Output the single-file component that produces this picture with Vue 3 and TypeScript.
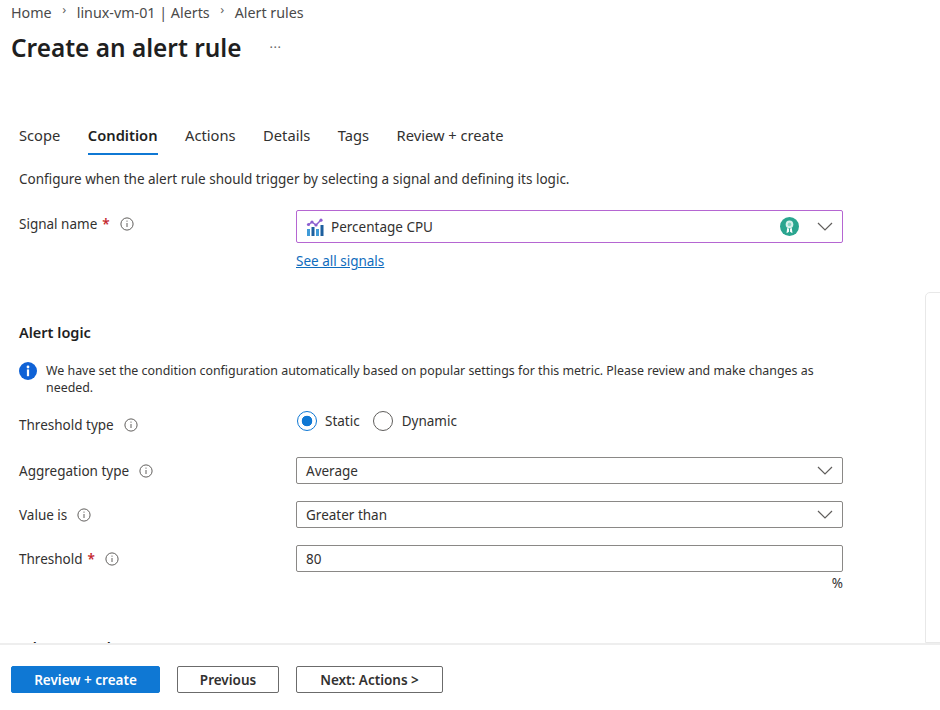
<template>
  <div class="page">
    <div class="content">
      <nav class="breadcrumb">
        <span>Home</span>
        <span class="crumb-sep">&rsaquo;</span>
        <span>linux-vm-01 | Alerts</span>
        <span class="crumb-sep">&rsaquo;</span>
        <span>Alert rules</span>
      </nav>
      <div class="title-row">
        <h1>Create an alert rule</h1>
        <span class="more">···</span>
      </div>

      <div class="tabs">
        <span v-for="tab in tabs" :key="tab" class="tab" :class="{ active: tab === 'Condition' }">{{ tab }}</span>
      </div>

      <p class="intro">Configure when the alert rule should trigger by selecting a signal and defining its logic.</p>

      <div class="form-row signal-row">
        <div class="label">
          Signal name <span class="req">*</span>
          <svg class="tip" viewBox="0 0 14 14"><circle cx="7" cy="7" r="6.1" /><path d="M7 6v4M7 3.6v1.1" /></svg>
        </div>
        <div>
          <div class="select signal">
            <svg class="metric-icon" width="18" height="18" viewBox="0 0 18 18">
              <path d="M2 7l4-3 4 3 5-5" fill="none" stroke="#8c5fd0" stroke-width="1.4" />
              <circle cx="2.5" cy="6.5" r="1.6" fill="#8c5fd0" />
              <circle cx="6" cy="4" r="1.6" fill="#8c5fd0" />
              <circle cx="10" cy="7" r="1.6" fill="#8c5fd0" />
              <circle cx="15" cy="2.2" r="1.6" fill="#8c5fd0" />
              <rect x="1" y="11" width="3" height="7" fill="#3f9bd8" />
              <rect x="5.5" y="9" width="3" height="9" fill="#1d5f9e" />
              <rect x="10" y="11" width="3" height="7" fill="#3f9bd8" />
              <rect x="14.5" y="7" width="3" height="11" fill="#1d5f9e" />
            </svg>
            <span class="grow">Percentage CPU</span>
            <svg class="badge" width="19" height="19" viewBox="0 0 18 18">
              <circle cx="9" cy="9" r="9" fill="#2aa58f" />
              <path d="M6.8 10.5L6.2 15.5 8.5 14V11ZM11.2 10.5L11.8 15.5 9.5 14V11Z" fill="#fff" />
              <circle cx="9" cy="7" r="3.6" fill="#d8f1ec" />
              <circle cx="9" cy="7" r="1.7" fill="#8fd6c8" />
            </svg>
            <svg class="chevron" width="16" height="9" viewBox="0 0 16 9"><path d="M1 1l7 7 7-7" /></svg>
          </div>
          <a class="link">See all signals</a>
        </div>
      </div>

      <h2>Alert logic</h2>
      <div class="notice">
        <svg class="info" width="18" height="18" viewBox="0 0 18 18">
          <circle cx="9" cy="9" r="9" fill="#0f62d6" />
          <rect x="7.9" y="7.4" width="2.2" height="6.8" fill="#fff" />
          <circle cx="9" cy="5" r="1.4" fill="#fff" />
        </svg>
        <p>We have set the condition configuration automatically based on popular settings for this metric. Please review and make changes as needed.</p>
      </div>

      <div class="form-row threshold-type">
        <div class="label">
          Threshold type
          <svg class="tip" viewBox="0 0 14 14"><circle cx="7" cy="7" r="6.1" /><path d="M7 6v4M7 3.6v1.1" /></svg>
        </div>
        <div class="radios">
          <span class="radio on"></span><span class="radio-text">Static</span>
          <span class="radio"></span><span class="radio-text">Dynamic</span>
        </div>
      </div>

      <div v-for="row in selectRows" :key="row.label" class="form-row field-row">
        <div class="label">
          {{ row.label }} <span v-if="row.required" class="req">*</span>
          <svg class="tip" viewBox="0 0 14 14"><circle cx="7" cy="7" r="6.1" /><path d="M7 6v4M7 3.6v1.1" /></svg>
        </div>
        <div class="select">
          <span class="grow">{{ row.value }}</span>
          <svg v-if="!row.isInput" class="chevron" width="16" height="9" viewBox="0 0 16 9"><path d="M1 1l7 7 7-7" /></svg>
        </div>
      </div>
      <div class="unit">%</div>

      <h2 class="when">When to evaluate</h2>

      <div class="side-panel"></div>
    </div>

    <footer class="footer">
      <button class="btn primary">Review + create</button>
      <button class="btn prev">Previous</button>
      <button class="btn next">Next: Actions &gt;</button>
    </footer>
  </div>
</template>

<script setup lang="ts">
const tabs: string[] = ['Scope', 'Condition', 'Actions', 'Details', 'Tags', 'Review + create']

const selectRows = [
  { label: 'Aggregation type', value: 'Average' },
  { label: 'Value is', value: 'Greater than' },
  { label: 'Threshold', value: '80', required: true, isInput: true }
]
</script>

<style>
html,
body {
  background: #fff;
}
</style>

<style scoped>
.page {
  width: 940px;
  height: 710px;
  display: flex;
  flex-direction: column;
  overflow: hidden;
  background: #fff;
  color: #323130;
  font-family: "Noto Sans", "Open Sans", sans-serif;
  font-size: 13.5px;
}

.content {
  position: relative;
  flex: 1;
  min-height: 0;
  overflow: hidden;
  padding: 0 0 0 19px;
}

.breadcrumb {
  display: flex;
  align-items: center;
  gap: 10.5px;
  margin-left: -8px;
  height: 24px;
  font-size: 14.3px;
  color: #4a4a4a;
}

.crumb-sep {
  font-size: 13px;
  margin-top: -6px;
  color: #666;
}

.title-row {
  display: flex;
  align-items: center;
  margin-left: -8px;
  height: 46px;
}

h1 {
  margin: 0;
  font-size: 24.4px;
  font-weight: 600;
  color: #1f1f1f;
}

.more {
  margin-left: 28px;
  font-size: 13px;
  letter-spacing: 0.5px;
  color: #666;
}

.tabs {
  display: flex;
  gap: 27.5px;
  margin-top: 53px;
  height: 32px;
  align-items: flex-start;
  font-size: 14.7px;
}

.tab {
  height: 30px;
  line-height: 24px;
}

.tab.active {
  font-weight: 600;
  border-bottom: 2px solid #0f78d4;
  color: #1f1f1f;
}

.intro {
  margin: 14px 0 0;
  line-height: 20px;
  height: 20px;
}

.form-row {
  display: grid;
  grid-template-columns: 277px 547px;
}

.signal-row {
  margin-top: 21px;
}

.label {
  display: flex;
  align-items: center;
  gap: 5px;
  height: 27px;
  box-sizing: border-box;
}

.field-row .label {
  padding-top: 1px;
}

.signal-row .label {
  height: 28px;
}

.req {
  color: #c4262e;
  font-weight: 600;
}

.tip {
  width: 14px;
  height: 14px;
  margin-left: 5px;
  fill: none;
  stroke: #605e5c;
  stroke-width: 1;
}

.select {
  display: flex;
  align-items: center;
  height: 27px;
  box-sizing: border-box;
  padding: 0 9px;
  border: 1px solid #8a8886;
  border-radius: 2px;
}

.select.signal {
  height: 33px;
  border: 1px solid #b566d2;
  padding-right: 9px;
}

.metric-icon {
  margin-right: 7px;
  flex: none;
}

.grow {
  flex: 1;
}

.badge {
  margin-right: 18px;
}

.chevron {
  fill: none;
  stroke: #605e5c;
  stroke-width: 1.2;
}

.link {
  display: block;
  margin-top: 8px;
  line-height: 20px;
  color: #0f6cbd;
  text-decoration: underline;
}

h2 {
  margin: 51px 0 0;
  font-size: 14.5px;
  font-weight: 600;
  line-height: 20px;
  color: #1f1f1f;
}

.notice {
  display: flex;
  gap: 9px;
  margin-top: 20px;
  width: 810px;
  font-size: 12.4px;
}

.notice p {
  margin: 0;
  line-height: 17px;
}

.info {
  flex: none;
}

.threshold-type {
  margin-top: 15px;
  padding-bottom: 2px;
}

.radios {
  display: flex;
  align-items: center;
  height: 20px;
  padding-left: 1px;
}

.radio {
  width: 20px;
  height: 20px;
  box-sizing: border-box;
  border: 1px solid #605e5c;
  border-radius: 50%;
}

.radio.on {
  border-color: #0f78d4;
  background: radial-gradient(circle, #0f78d4 0 5px, #fff 5.6px);
}

.radio-text {
  margin: 0 13px 0 8px;
}

.radio-text:last-child {
  margin-left: 9px;
}

.field-row {
  margin-top: 17px;
}

.unit {
  width: 824px;
  margin-top: 2px;
  text-align: right;
  line-height: 18px;
}

.when {
  margin-top: 45px;
}

.side-panel {
  position: absolute;
  left: 925px;
  top: 292px;
  width: 30px;
  bottom: 0;
  border: 1px solid #e8e8e8;
  border-radius: 5px 0 0 0;
}

.footer {
  flex: none;
  height: 67px;
  box-sizing: border-box;
  padding: 21px 0 0 11px;
  display: flex;
  align-items: flex-start;
  border-top: 2px solid #eeeeee;
  background: #fff;
}

.btn {
  height: 27px;
  box-sizing: border-box;
  border: 1px solid #6b6b6b;
  border-radius: 2px;
  background: #fff;
  color: #323130;
  font-family: inherit;
  font-size: 13.5px;
  font-weight: 600;
  padding: 0;
}

.btn.primary {
  width: 149px;
  background: #0f78d4;
  border-color: #0f78d4;
  color: #fff;
}

.btn.prev {
  width: 102px;
  margin-left: 17px;
}

.btn.next {
  width: 147px;
  margin-left: 17px;
}
</style>
